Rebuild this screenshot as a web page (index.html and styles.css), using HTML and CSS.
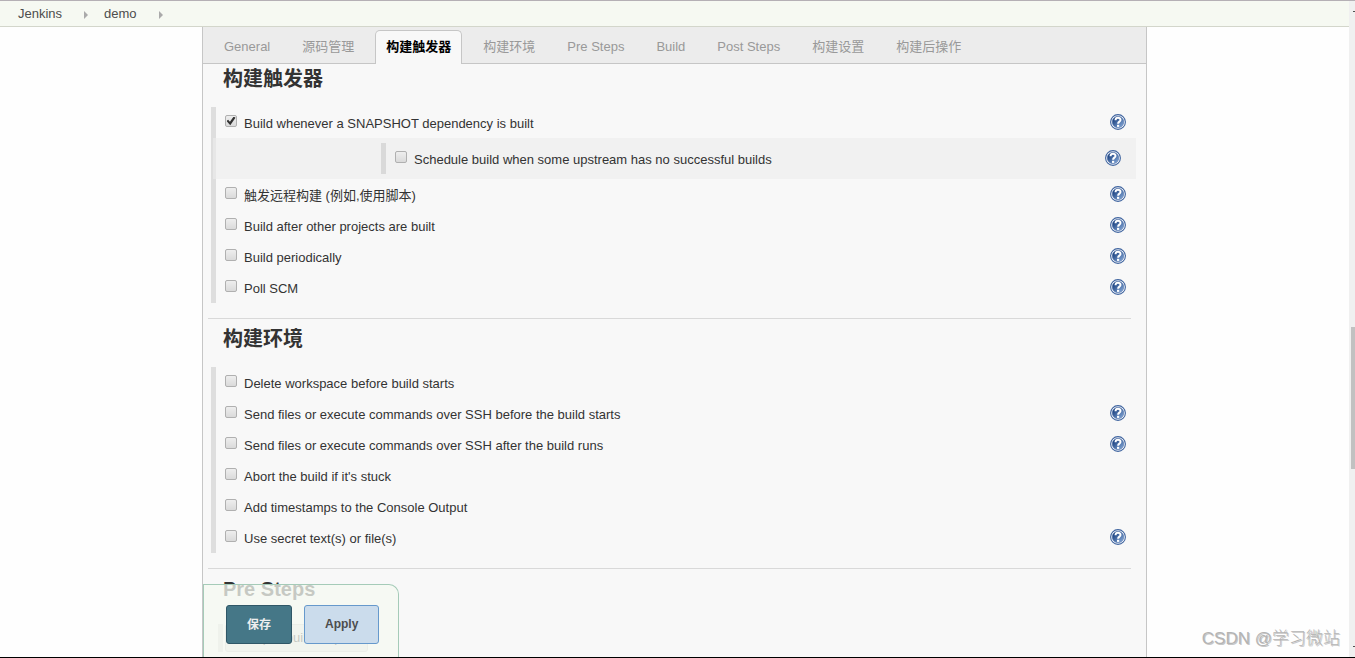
FILE: index.html
```
<!DOCTYPE html>
<html lang="zh-CN">
<head>
<meta charset="utf-8">
<title>demo Config [Jenkins]</title>
<link rel="stylesheet" href="styles.css">
</head>
<body>
<svg class="defs" aria-hidden="true">
  <defs>
    <linearGradient id="disc" x1="0" y1="0" x2="1" y2="1">
      <stop offset="0.2" stop-color="#1f4583"/>
      <stop offset="1" stop-color="#8fb2e0"/>
    </linearGradient>
    <symbol id="help" viewBox="0 0 16 16">
      <circle cx="8" cy="8" r="7.4" fill="#fff" stroke="#3f649f" stroke-width="1.1"/>
      <circle cx="8" cy="8" r="5.8" fill="url(#disc)" stroke="#4a6ea8" stroke-width="0.5"/>
      <path d="M5.5 6.2C5.6 3 10.6 3.1 10.5 6C10.4 7.8 8.1 7.6 8.1 9.8" fill="none" stroke="#fff" stroke-width="2"/>
      <rect x="7" y="10.8" width="2.2" height="2.1" fill="#fff"/>
    </symbol>
  </defs>
</svg>
<div class="page">
  <nav class="crumbs">
    <a href="#jenkins">Jenkins</a><span class="crumb-arrow"></span>
    <a href="#demo">demo</a><span class="crumb-arrow"></span>
  </nav>
  <div class="viewport">
    <main class="panel">
      <nav class="tabs">
        <a class="tab" href="#general">General</a>
        <a class="tab" href="#scm">源码管理</a>
        <a class="tab active" href="#triggers">构建触发器</a>
        <a class="tab" href="#env">构建环境</a>
        <a class="tab" href="#pre">Pre Steps</a>
        <a class="tab" href="#build">Build</a>
        <a class="tab" href="#post">Post Steps</a>
        <a class="tab" href="#settings">构建设置</a>
        <a class="tab" href="#after">构建后操作</a>
      </nav>
      <section class="section first">
        <h2>构建触发器</h2>
        <div class="group">
          <div class="row"><input type="checkbox" id="t1" checked><label for="t1">Build whenever a SNAPSHOT dependency is built</label><button class="help" aria-label="Help"><svg><use href="#help"/></svg></button></div>
          <div class="nested">
            <div class="row sub"><input type="checkbox" id="t2"><label for="t2">Schedule build when some upstream has no successful builds</label><button class="help" aria-label="Help"><svg><use href="#help"/></svg></button></div>
          </div>
          <div class="row"><input type="checkbox" id="t3"><label for="t3">触发远程构建 (例如,使用脚本)</label><button class="help" aria-label="Help"><svg><use href="#help"/></svg></button></div>
          <div class="row"><input type="checkbox" id="t4"><label for="t4">Build after other projects are built</label><button class="help" aria-label="Help"><svg><use href="#help"/></svg></button></div>
          <div class="row"><input type="checkbox" id="t5"><label for="t5">Build periodically</label><button class="help" aria-label="Help"><svg><use href="#help"/></svg></button></div>
          <div class="row"><input type="checkbox" id="t6"><label for="t6">Poll SCM</label><button class="help" aria-label="Help"><svg><use href="#help"/></svg></button></div>
        </div>
      </section>
      <section class="section">
        <h2>构建环境</h2>
        <div class="group">
          <div class="row"><input type="checkbox" id="e1"><label for="e1">Delete workspace before build starts</label></div>
          <div class="row"><input type="checkbox" id="e2"><label for="e2">Send files or execute commands over SSH before the build starts</label><button class="help" aria-label="Help"><svg><use href="#help"/></svg></button></div>
          <div class="row"><input type="checkbox" id="e3"><label for="e3">Send files or execute commands over SSH after the build runs</label><button class="help" aria-label="Help"><svg><use href="#help"/></svg></button></div>
          <div class="row"><input type="checkbox" id="e4"><label for="e4">Abort the build if it's stuck</label></div>
          <div class="row"><input type="checkbox" id="e5"><label for="e5">Add timestamps to the Console Output</label></div>
          <div class="row"><input type="checkbox" id="e6"><label for="e6">Use secret text(s) or file(s)</label><button class="help" aria-label="Help"><svg><use href="#help"/></svg></button></div>
        </div>
      </section>
      <section class="section">
        <h2>Pre Steps</h2>
        <div class="steps"><button class="add-step">Add pre-build step</button></div>
      </section>
      <div class="actions">
        <button class="btn save">保存</button>
        <button class="btn apply">Apply</button>
      </div>
    </main>
  </div>
  <div class="scroll"><div class="thumb"></div></div>
  <div class="watermark">CSDN @学习微站</div>
</div>
</body>
</html>
```
FILE: styles.css
```
* {
  box-sizing: border-box;
}

body {
  margin: 0;
  background: #fefefe;
  color: #333;
  font: 13px/18px "Liberation Sans", "Noto Sans CJK SC", sans-serif;
}

button {
  font-family: inherit;
}

.defs {
  position: absolute;
  width: 0;
  height: 0;
}

.page {
  position: relative;
  display: grid;
  grid-template-columns: 1fr 6px;
  grid-template-rows: auto 1fr;
  height: 100vh;
  overflow: hidden;
  border-top: 1px solid #b5b0b5;
  border-bottom: 1px solid #000;
}

.crumbs {
  display: flex;
  align-items: center;
  height: 26px;
  padding-left: 18px;
  background: #f6f9f2;
  border-bottom: 1px solid #d3d6cb;
}

.crumbs a {
  color: #4d4d4d;
  text-decoration: none;
}

.crumb-arrow {
  margin: 2px 16px 0 22px;
  border: solid transparent;
  border-width: 4px 0 4px 4px;
  border-left-color: #aaa;
}

.viewport {
  grid-row: 2;
  min-height: 0;
}

.panel {
  position: relative;
  height: 100%;
  overflow: hidden;
  margin: 0 202px;
  background: #f8f8f8;
  border: solid #c6c6c6;
  border-width: 0 1px;
}

.tabs {
  display: flex;
  gap: 10px;
  height: 37px;
  padding: 3px 10px 0;
  background: #ececec;
  border-bottom: 1px solid #c6c6c6;
}

.tab {
  height: 34px;
  padding: 0 10px;
  border: 1px solid transparent;
  border-bottom: 0;
  border-radius: 5px 5px 0 0;
  color: #999;
  line-height: 31px;
  text-decoration: none;
  white-space: nowrap;
}

.tab.active {
  background: #f8f8f8;
  border-color: #c6c6c6;
  color: #000;
  font-weight: bold;
}

.section {
  margin: 15px 15px 0 5px;
  padding-top: 5px;
  border-top: 1px solid #d9d9d9;
}

.section.first {
  margin-top: 0;
  padding-top: 0;
  border-top: 0;
}

h2 {
  margin: 0 0 13px 15px;
  font-size: 20px;
  line-height: 30px;
}

.group {
  margin: 0 -5px 0 3px;
  border-left: 5px solid #dedede;
}

.row {
  display: flex;
  align-items: flex-start;
  height: 31px;
  padding: 7px 10px 0 9px;
  line-height: 20px;
}

.row input {
  display: grid;
  place-items: center;
  appearance: none;
  width: 12px;
  height: 12px;
  margin: 1px 7px 0 0;
  background: linear-gradient(#eee, #dadada);
  border: 1px solid #b0b0b0;
  border-radius: 2px;
}

.row input:checked::before {
  content: "";
  width: 9px;
  height: 9px;
  background: #333;
  clip-path: polygon(0 50%, 18% 36%, 38% 58%, 80% 0, 100% 14%, 42% 96%);
}

.help {
  width: 16px;
  height: 16px;
  margin-left: auto;
  padding: 0;
  background: none;
  border: 0;
}

.help svg {
  display: block;
  width: 16px;
  height: 16px;
}

.nested {
  margin-left: -3px;
  padding: 5px 5px 5px 168px;
  background: rgba(236, 236, 236, 0.6);
}

.row.sub {
  border-left: 5px solid #d9d9d9;
}

.steps {
  margin: 20px 0 0 10px;
  padding-left: 2px;
  border-left: 5px solid #dedede;
}

.add-step {
  display: block;
  width: 143px;
  height: 28px;
  margin-bottom: 3px;
  padding: 0 10px 2px;
  background: #e4e4e4;
  border: 1px solid #ccc;
  border-radius: 3px;
  color: #333;
  font-size: 13px;
  text-align: left;
}

.actions {
  position: absolute;
  bottom: 0;
  left: 0;
  display: flex;
  gap: 12px;
  padding: 20px 19px 13px 22px;
  background: rgba(244, 248, 240, 0.76);
  border: 1px solid #a5cbb8;
  border-bottom: 0;
  border-radius: 0 10px 0 0;
}

.btn {
  height: 39px;
  padding: 0 20px 2px;
  border: 1px solid #2f5767;
  border-radius: 3px;
  font-size: 12px;
  font-weight: bold;
}

.save {
  background: #457787;
  color: #eee;
}

.apply {
  background: #cbdcec;
  border-color: #69c;
  color: #4d4d4d;
}

.scroll {
  display: flex;
  flex-direction: column;
  grid-column: 2;
  grid-row: 1 / 3;
  padding: 10px 0 10px 2px;
  background: #f0f0f0;
}

.scroll::before,
.scroll::after {
  content: "";
  align-self: flex-end;
  width: 2px;
  height: 1px;
  background: #505050;
}

.scroll::after {
  margin-top: auto;
}

.thumb {
  height: 142px;
  margin-top: 315px;
  background: #c1c1c1;
}

.watermark {
  position: absolute;
  right: 15px;
  bottom: 5px;
  color: #b4b4b4;
  font: 300 17px/26px "Liberation Sans", "Noto Sans CJK SC", sans-serif;
  text-shadow: 1px 1px 0 #c8c8c8;
}
```
